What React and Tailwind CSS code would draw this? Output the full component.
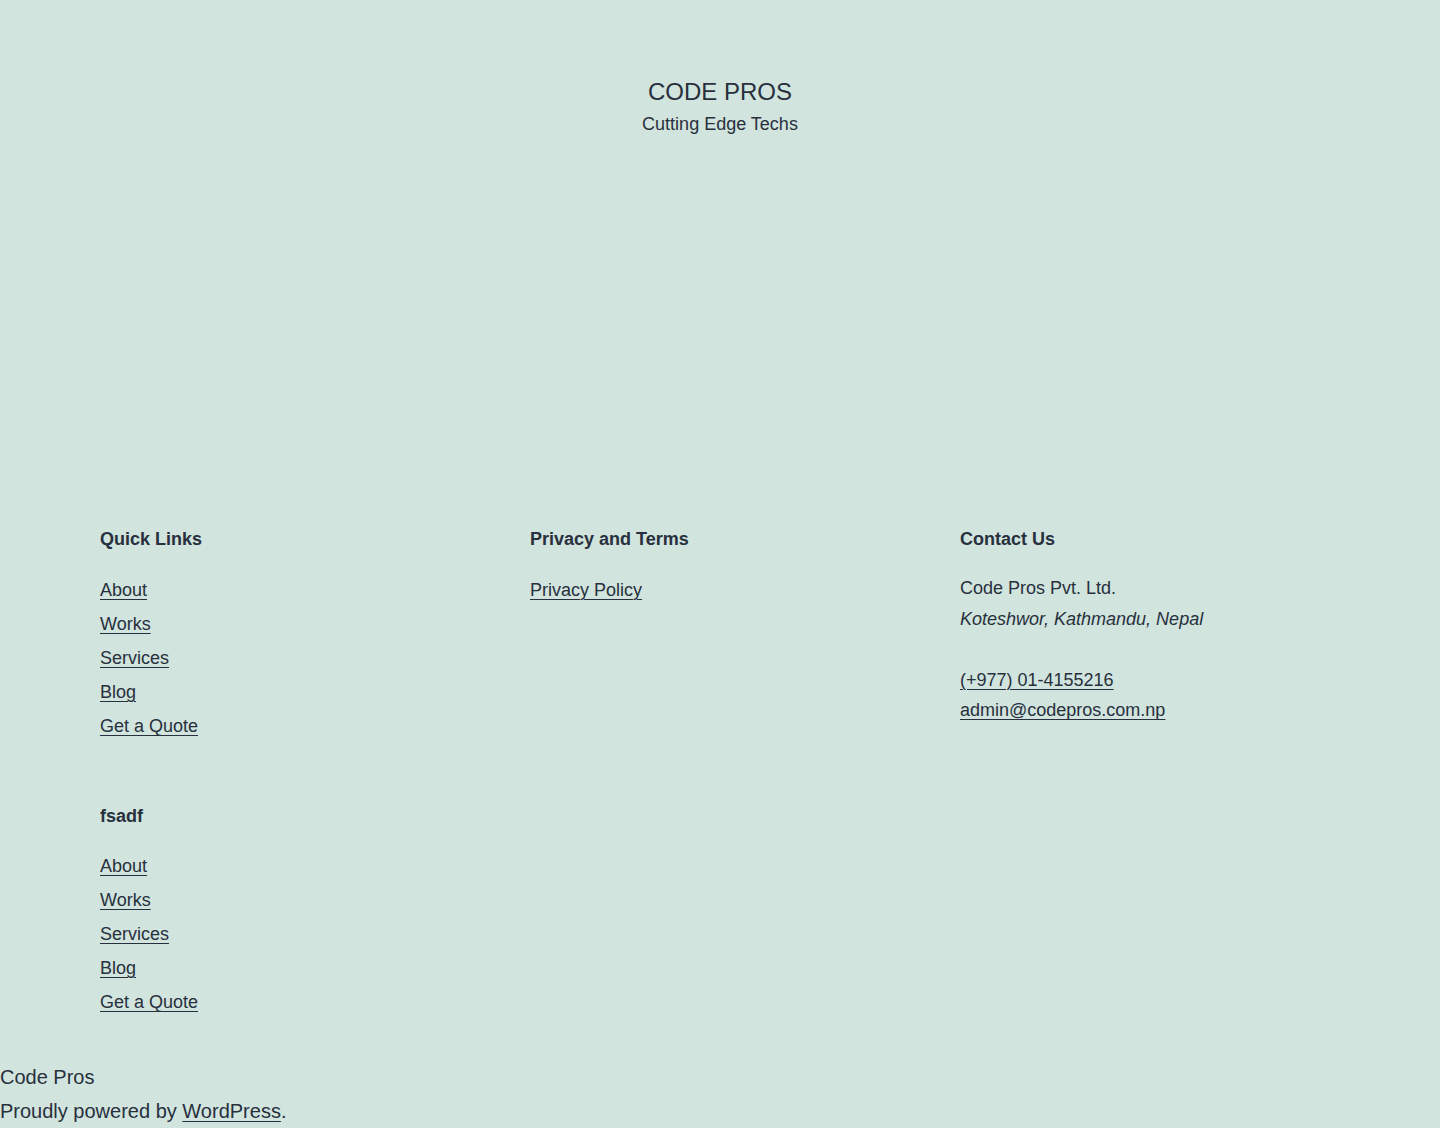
export default function App() {
  const links = ["About", "Works", "Services", "Blog", "Get a Quote"];
  const LinkList = ({ mt }) => (
    <ul className={`flex flex-col ${mt}`}>
      {links.map((l) => (
        <li key={l} className="leading-[34px]">
          <a href="#" className="underline decoration-1 underline-offset-[3px]">
            {l}
          </a>
        </li>
      ))}
    </ul>
  );
  return (
    <div
      className="min-h-[1128px] bg-[#d1e4dd] text-[#28303d] text-[18px]"
      style={{ fontFamily: '"Liberation Sans", Arial, sans-serif' }}
    >
      <header className="pt-[77px] flex flex-col items-center">
        <div className="text-[24px] leading-[30px] uppercase">Code Pros</div>
        <div className="mt-[2px] text-[18px] leading-[30px]">Cutting Edge Techs</div>
      </header>
      <div className="mt-[385px] px-[100px] grid grid-cols-[430px_430px_380px] gap-y-[58px]">
        <section>
          <h2 className="font-bold leading-[30px]">Quick Links</h2>
          <LinkList mt="mt-[19px]" />
        </section>
        <section>
          <h2 className="font-bold leading-[30px]">Privacy and Terms</h2>
          <ul className="mt-[19px]">
            <li className="leading-[34px]">
              <a href="#" className="underline decoration-1 underline-offset-[3px]">
                Privacy Policy
              </a>
            </li>
          </ul>
        </section>
        <section>
          <h2 className="font-bold leading-[30px]">Contact Us</h2>
          <p className="mt-[19px] leading-[30.6px]">
            Code Pros Pvt. Ltd.
            <br />
            <em>Koteshwor, Kathmandu, Nepal</em>
            <br />
            <br />
            <a href="#" className="underline decoration-1 underline-offset-[3px]">
              (+977) 01-4155216
            </a>
            <br />
            <a href="#" className="underline decoration-1 underline-offset-[3px]">
              admin@codepros.com.np
            </a>
          </p>
        </section>
        <section>
          <h2 className="font-bold leading-[30px]">fsadf</h2>
          <LinkList mt="mt-[18px]" />
        </section>
      </div>
      <footer className="mt-[41px] text-[20px] leading-[34px]">
        <div>Code Pros</div>
        <div>
          Proudly powered by{" "}
          <a href="#" className="underline decoration-1 underline-offset-[3px]">
            WordPress
          </a>
          .
        </div>
      </footer>
    </div>
  );
}
